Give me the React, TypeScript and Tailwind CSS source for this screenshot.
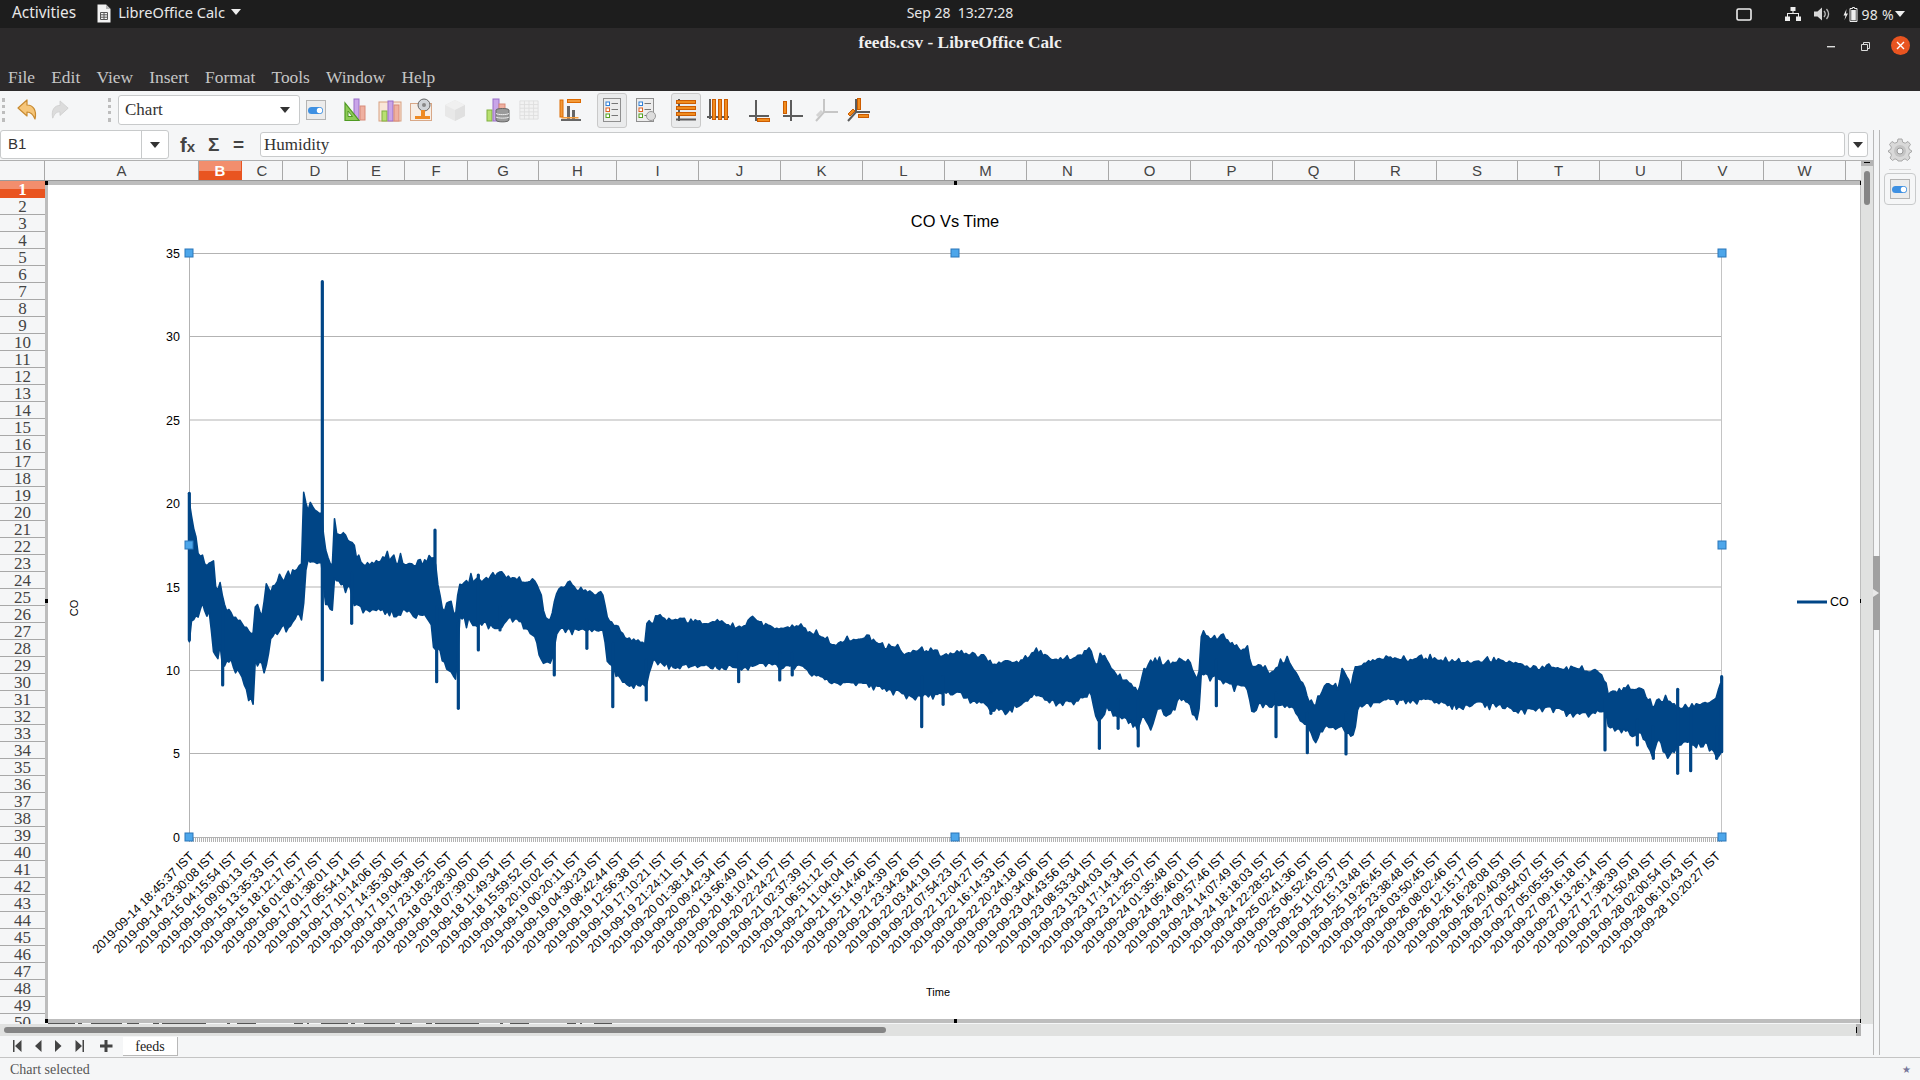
import { useMemo } from "react";

const serif = "font-['Liberation_Serif',serif]";
const sans = "font-['Liberation_Sans',sans-serif]";
const ui = "font-['Noto_Sans',sans-serif]";

type Col = { label: string; w: number; active?: boolean };

const columns: Col[] = [
  { label: "A", w: 154 },
  { label: "B", w: 43, active: true },
  { label: "C", w: 41 },
  { label: "D", w: 65 },
  { label: "E", w: 57 },
  { label: "F", w: 63 },
  { label: "G", w: 71 },
  { label: "H", w: 78 },
  { label: "I", w: 82 },
  { label: "J", w: 82 },
  { label: "K", w: 82 },
  { label: "L", w: 82 },
  { label: "M", w: 82 },
  { label: "N", w: 82 },
  { label: "O", w: 82 },
  { label: "P", w: 82 },
  { label: "Q", w: 82 },
  { label: "R", w: 82 },
  { label: "S", w: 81 },
  { label: "T", w: 82 },
  { label: "U", w: 82 },
  { label: "V", w: 82 },
  { label: "W", w: 82 },
];

const stamps = `2019-09-14 18:45:37,2019-09-14 23:30:08,2019-09-15 04:15:54,2019-09-15 09:00:13,2019-09-15 13:35:33,2019-09-15 18:12:17,2019-09-16 01:08:17,2019-09-17 01:38:01,2019-09-17 05:54:14,2019-09-17 10:14:06,2019-09-17 14:35:30,2019-09-17 19:04:38,2019-09-17 23:18:25,2019-09-18 03:28:30,2019-09-18 07:39:00,2019-09-18 11:49:34,2019-09-18 15:59:52,2019-09-18 20:10:02,2019-09-19 00:20:11,2019-09-19 04:30:23,2019-09-19 08:42:44,2019-09-19 12:56:38,2019-09-19 17:10:21,2019-09-19 21:24:11,2019-09-20 01:38:14,2019-09-20 09:42:34,2019-09-20 13:56:49,2019-09-20 18:10:41,2019-09-20 22:24:27,2019-09-21 02:37:39,2019-09-21 06:51:12,2019-09-21 11:04:04,2019-09-21 15:14:46,2019-09-21 19:24:39,2019-09-21 23:34:26,2019-09-22 03:44:19,2019-09-22 07:54:23,2019-09-22 12:04:27,2019-09-22 16:14:33,2019-09-22 20:24:18,2019-09-23 00:34:06,2019-09-23 04:43:56,2019-09-23 08:53:34,2019-09-23 13:04:03,2019-09-23 17:14:34,2019-09-23 21:25:07,2019-09-24 01:35:48,2019-09-24 05:46:01,2019-09-24 09:57:46,2019-09-24 14:07:49,2019-09-24 18:18:03,2019-09-24 22:28:52,2019-09-25 02:41:36,2019-09-25 06:52:45,2019-09-25 11:02:37,2019-09-25 15:13:48,2019-09-25 19:26:45,2019-09-25 23:38:48,2019-09-26 03:50:45,2019-09-26 08:02:46,2019-09-26 12:15:17,2019-09-26 16:28:08,2019-09-26 20:40:39,2019-09-27 00:54:07,2019-09-27 05:05:55,2019-09-27 09:16:18,2019-09-27 13:26:14,2019-09-27 17:38:39,2019-09-27 21:50:49,2019-09-28 02:00:54,2019-09-28 06:10:43,2019-09-28 10:20:27`.split(",");

// envelope of the CO series, traced off the plot: [x, top, bottom]
const traceA = [[148,780,1190],[155,830,1130],[165,880,1130],[175,950,1130],[185,960,1090],[205,975,1100],[215,970,1150],[222,990,1260],[230,1060,1240],[240,1035,1210],[248,1080,1280],[258,1115,1270],[275,1125,1260],[285,1140,1285],[300,1135,1290],[315,1165,1340],[325,1165,1370],[340,1190,1385],[345,1105,1260],[355,1110,1265],[365,1130,1275],[378,1040,1285],[392,1060,1190],[410,1030,1180],[430,1020,1160],[450,1010,1160],[470,985,1125],[488,965,1115],[490,770,1100],[500,810,960],[510,805,970],[530,815,960],[545,820,970],[555,920,1080],[570,965,1110],[578,975,1115],[582,845,1020],[590,880,1020],[610,885,1035],[630,900,1040],[640,905,1090],[650,955,1095],[680,975,1115],[710,965,1110],[745,958,1115],[770,965,1105],[800,970,1115],[850,975,1125],[870,955,1130],[885,950,1225],[895,1040,1220],[905,1110,1250],[920,1115,1280],[930,1085,1295],[945,1125,1320],[950,1130,1330],[958,1030,1135],[1000,1025,1140],[1030,1020,1150],[1080,1000,1170],[1110,1015,1130],[1140,1020,1145],[1190,1030,1200]].map(([x, t, b]) => [140 + x / 3, 240 + t / 3, 240 + b / 3]);
const traceB = [[0,95,290],[10,165,310],[25,180,310],[40,85,210],[60,72,210],[90,90,210],[143,105,215],[150,170,300],[175,205,345],[195,235,380],[215,245,375],[235,248,375],[240,185,350],[255,185,300],[268,165,310],[290,185,315],[315,175,320],[340,190,315],[380,190,320],[412,185,320],[430,205,320],[445,210,325],[480,170,320],[500,195,310],[537,205,320],[585,195,320],[600,215,335],[630,228,355],[660,255,370],[680,242,372],[730,232,372],[750,245,380],[780,265,390],[800,260,395],[820,290,410],[850,268,410],[880,280,405],[903,285,400],[945,275,400],[965,290,425],[990,285,425],[1010,310,455],[1025,310,445],[1042,305,460],[1060,310,440],[1085,300,430],[1107,272,405],[1135,290,420],[1165,300,430],[1200,295,425],[1233,265,395],[1248,330,470],[1253,272,490],[1270,310,440],[1295,350,475],[1320,365,480],[1340,395,505],[1350,340,470],[1367,305,505],[1385,303,440],[1410,320,470],[1432,295,415],[1455,305,430],[1475,370,495],[1480,228,345],[1515,235,350],[1530,232,365],[1560,262,378]].map(([x, t, b]) => [540 + x / 2.24, 560 + t / 3, 560 + b / 3]);
const traceC = [[0,150,260],[20,140,265],[40,210,340],[60,193,310],[90,220,320],[125,190,315],[140,185,320],[165,210,330],[180,240,365],[205,300,380],[225,320,435],[240,290,400],[258,245,380],[280,255,385],[295,275,390],[307,200,380],[335,262,410],[342,195,410],[355,195,315],[400,180,312],[445,170,300],[510,182,305],[540,175,300],[600,180,305],[660,185,320],[720,185,310],[780,182,315],[830,190,330],[890,210,330],[930,195,322],[1000,212,345],[1075,210,335],[1098,250,340],[1103,280,380],[1160,268,395],[1205,268,405],[1240,320,470],[1255,300,415],[1285,300,465],[1330,330,430],[1375,310,430],[1405,305,435],[1430,295,470],[1445,230,455]].map(([x, t, b]) => [1240 + x / 3, 600 + t / 3, 600 + b / 3]);

// narrow dips and peaks that stick out of the band: [x, y1, y2]
const spikes = [
  [140 + 148 / 3, 240 + 760 / 3, 240 + 1200 / 3],
  [140 + 248 / 3, 240 + 1100 / 3, 240 + 1335 / 3],
  [140 + 547 / 3, 240 + 125 / 3, 240 + 1320 / 3],
  [140 + 635 / 3, 240 + 1000 / 3, 240 + 1150 / 3],
  [140 + 885 / 3, 240 + 870 / 3, 240 + 1000 / 3],
  [140 + 890 / 3, 240 + 1100 / 3, 240 + 1325 / 3],
  [140 + 955 / 3, 240 + 1150 / 3, 240 + 1405 / 3],
  [140 + 1015 / 3, 240 + 1005 / 3, 240 + 1230 / 3],
  [140 + 1080 / 3, 240 + 1100 / 3, 240 + 1170 / 3],
  [540 + 32 / 2.24, 560 + 250 / 3, 560 + 345 / 3],
  [540 + 105 / 2.24, 560 + 180 / 3, 560 + 265 / 3],
  [540 + 163 / 2.24, 560 + 250 / 3, 560 + 440 / 3],
  [540 + 238 / 2.24, 560 + 300 / 3, 560 + 420 / 3],
  [540 + 445 / 2.24, 560 + 280 / 3, 560 + 365 / 3],
  [540 + 537 / 2.24, 560 + 280 / 3, 560 + 360 / 3],
  [540 + 565 / 2.24, 560 + 280 / 3, 560 + 345 / 3],
  [540 + 855 / 2.24, 560 + 350 / 3, 560 + 500 / 3],
  [540 + 903 / 2.24, 560 + 350 / 3, 560 + 433 / 3],
  [540 + 1010 / 2.24, 560 + 400 / 3, 560 + 460 / 3],
  [540 + 1253 / 2.24, 560 + 400 / 3, 560 + 565 / 3],
  [540 + 1295 / 2.24, 560 + 420 / 3, 560 + 505 / 3],
  [540 + 1340 / 2.24, 560 + 420 / 3, 560 + 558 / 3],
  [540 + 1515 / 2.24, 560 + 300 / 3, 560 + 437 / 3],
  [1240 + 108 / 3, 600 + 280 / 3, 600 + 410 / 3],
  [1240 + 202 / 3, 600 + 340 / 3, 600 + 458 / 3],
  [1240 + 318 / 3, 600 + 340 / 3, 600 + 462 / 3],
  [1240 + 1095 / 3, 600 + 300 / 3, 600 + 450 / 3],
  [1240 + 1192 / 3, 600 + 360 / 3, 600 + 435 / 3],
  [1240 + 1240 / 3, 600 + 380 / 3, 600 + 475 / 3],
  [1240 + 1313 / 3, 600 + 268 / 3, 600 + 520 / 3],
  [1240 + 1352 / 3, 600 + 330 / 3, 600 + 512 / 3],
  [1240 + 1430 / 3, 600 + 380 / 3, 600 + 475 / 3],
  [1240 + 1445 / 3, 600 + 230 / 3, 600 + 455 / 3],
];

function noise(i: number) {
  const v = Math.sin(i * 12.9898) * 43758.5453;
  return v - Math.floor(v);
}

function buildBand() {
  const pts = [...traceA, ...traceB, ...traceC];
  const top: string[] = [];
  const bottom: string[] = [];
  let seg = 0;
  let i = 0;
  for (let x = pts[0][0]; x <= pts[pts.length - 1][0]; x += 2.2) {
    while (seg < pts.length - 2 && pts[seg + 1][0] < x) seg++;
    const a = pts[seg];
    const b = pts[seg + 1];
    const t = (x - a[0]) / (b[0] - a[0] || 1);
    // the start of the series is a lot rougher than the rest
    const rough = x < 480 ? 8 : 5;
    const up = a[1] + (b[1] - a[1]) * t + 2 - noise(i) * noise(i + 90) * rough * 1.6;
    const down = a[2] + (b[2] - a[2]) * t - 2 + noise(i + 500) * noise(i + 700) * rough * 1.6;
    top.push(`${x.toFixed(1)},${up.toFixed(1)}`);
    bottom.unshift(`${x.toFixed(1)},${down.toFixed(1)}`);
    i++;
  }
  return [...top, ...bottom].join(" ");
}

function Chart() {
  const band = useMemo(buildBand, []);
  const ticks = [
    { v: 35, y: 253.5 },
    { v: 30, y: 336.5 },
    { v: 25, y: 420 },
    { v: 20, y: 503.5 },
    { v: 15, y: 587 },
    { v: 10, y: 670.5 },
    { v: 5, y: 753.5 },
    { v: 0, y: 837.5 },
  ];
  const handles = [
    [189, 253],
    [955, 253],
    [1722, 253],
    [189, 545],
    [1722, 545],
    [189, 837],
    [955, 837],
    [1722, 837],
  ];
  const blackMarks = [
    [45, 181, 3, 4],
    [954, 181, 3, 4],
    [1860, 181, 1, 4],
    [45, 599, 3, 4],
    [1860, 599, 1, 4],
    [45, 1019, 3, 4],
    [954, 1019, 3, 4],
    [1860, 1019, 1, 4],
  ];
  return (
    <svg viewBox="45 181 1816 843" className={`block w-[1816px] h-[843px] ${sans}`}>
      <rect x="45" y="181" width="1816" height="842" fill="#ffffff" />
      <rect x="45" y="181" width="1816" height="4" fill="#bdbdbd" />
      <rect x="45" y="1019" width="1816" height="4" fill="#bdbdbd" />
      <rect x="45" y="181" width="3" height="842" fill="#bdbdbd" />
      <rect x="1860" y="181" width="1" height="842" fill="#bdbdbd" />
      {blackMarks.map(([x, y, w, h]) => (
        <rect key={`${x}-${y}`} x={x} y={y} width={w} height={h} fill="#000" />
      ))}
      <line x1="48" x2="612" y1="1023.5" y2="1023.5" stroke="#555" strokeDasharray="27 3 4 9 31 5 12 14 6 3 44 21 3 7 19 38 9 4 2 12" />

      <text x="955" y="227" textAnchor="middle" fontSize="16.4" fill="#000">
        CO Vs Time
      </text>
      {ticks.map((t) => (
        <g key={t.v}>
          <line x1="189.5" x2="1722" y1={t.y} y2={t.y} stroke="#b3b3b3" />
          <text x="180" y={t.y + 4.5} textAnchor="end" fontSize="12.5" fill="#000">
            {t.v}
          </text>
        </g>
      ))}
      <line x1="189.5" x2="189.5" y1="253" y2="838" stroke="#b3b3b3" />
      <line x1="1721.5" x2="1721.5" y1="253" y2="838" stroke="#c4c4c4" />
      <line x1="189" x2="1722" y1="840" y2="840" stroke="#b3b3b3" strokeWidth="4" strokeDasharray="1 1" />

      <polygon points={band} fill="#004586" stroke="#004586" strokeWidth="1.6" strokeLinejoin="round" />
      {spikes.map(([x, a, b], i) => (
        <line key={i} x1={x} x2={x} y1={a} y2={b} stroke="#004586" strokeWidth="3.2" strokeLinecap="round" />
      ))}

      {handles.map(([x, y]) => (
        <rect key={`${x}-${y}`} x={x - 4} y={y - 4} width="8" height="8" fill="#4da6ea" stroke="#2b76b9" />
      ))}

      {stamps.map((s, i) => {
        const x = 194.5 + i * 21.5;
        return (
          <text key={s} x={x} y="857" textAnchor="end" fontSize="12.35" fill="#000" transform={`rotate(-45 ${x} 857)`}>
            {s} IST
          </text>
        );
      })}

      <text x="938" y="996" textAnchor="middle" fontSize="11" fill="#000">
        Time
      </text>
      <text x="78" y="608" textAnchor="middle" fontSize="11" fill="#000" transform="rotate(-90 78 608)">
        CO
      </text>
      <line x1="1797" x2="1827" y1="602" y2="602" stroke="#004586" strokeWidth="3" />
      <text x="1830" y="606" fontSize="12.5" fill="#000">
        CO
      </text>
    </svg>
  );
}

function Caret({ className = "", color = "#333" }: { className?: string; color?: string }) {
  return (
    <svg width="10" height="6" viewBox="0 0 10 6" className={className}>
      <polygon points="0,0 10,0 5,6" fill={color} />
    </svg>
  );
}

function CalcDocIcon() {
  return (
    <svg width="14" height="19" viewBox="0 0 14 19">
      <path d="M0.5 0.5H9L13.5 5V18.5H0.5Z" fill="#f2f2f2" />
      <path d="M9 0.5V5H13.5Z" fill="#b5b5b5" />
      <path d="M3.5 8.5H10.5V15.5H3.5ZM3.5 10.8H10.5M3.5 13.2H10.5M7 8.5V15.5" fill="none" stroke="#555" strokeWidth="1" />
    </svg>
  );
}

function SysIcons() {
  return (
    <div className="flex items-center">
      <svg width="16" height="13" viewBox="0 0 16 13" className="mr-[33px]">
        <rect x="1" y="1" width="14" height="11" rx="1.5" fill="none" stroke="#eee" strokeWidth="1.6" />
      </svg>
      <svg width="16" height="14" viewBox="0 0 16 14" className="mr-[13px]">
        <path d="M5.5 0H10.5V4H8.5V6H14V9.5H16V14H11V9.5H13V7H3V9.5H5V14H0V9.5H2V6H7.5V4H5.5Z" fill="#eee" />
      </svg>
      <svg width="16" height="14" viewBox="0 0 16 14" className="mr-[13px]">
        <path d="M0 4.5H3.5L8 0.5V13.5L3.5 9.5H0Z" fill="#d8d8d8" />
        <path d="M10 4C11.4 5.7 11.4 8.3 10 10M12.5 2C15 5 15 9 12.5 12" fill="none" stroke="#bbb" strokeWidth="1.3" />
      </svg>
      <svg width="15" height="15" viewBox="0 0 15 15" className="mr-[4px]">
        <path d="M3.5 2L0.5 8.5H2.5L1.5 13L5 6.5H3Z" fill="#eee" />
        <path d="M9.5 0.5H11.5V1.5H14V14.5H7V1.5H9.5Z" fill="none" stroke="#eee" />
        <rect x="8.2" y="3" width="4.6" height="10.4" fill="#eee" />
      </svg>
      <span className="text-[14px] tracking-[0.3px] text-[#e6e6e6]">98 %</span>
      <Caret color="#eee" className="ml-[1px]" />
    </div>
  );
}

function TopBar() {
  return (
    <div className={`grid h-[28px] grid-cols-[1fr_auto_1fr] items-center bg-[#1d1d1d] pb-[3px] text-[14.6px] text-[#e8e8e8] ${ui}`}>
      <div className="flex items-center pl-[12px]">
        <span className="text-[15.4px]">Activities</span>
        <span className="ml-[21px] mt-[3px]">
          <CalcDocIcon />
        </span>
        <span className="ml-[7px]">LibreOffice Calc</span>
        <Caret color="#eee" className="ml-[6px]" />
      </div>
      <div className="whitespace-pre text-[14px]">Sep 28  13:27:28</div>
      <div className="flex justify-end pr-[15px] pt-[3px]">
        <SysIcons />
      </div>
    </div>
  );
}

function TitleBar() {
  const menus = ["File", "Edit", "View", "Insert", "Format", "Tools", "Window", "Help"];
  return (
    <div className={`bg-[#2c2a2b] ${serif}`}>
      <div className="grid h-[35px] grid-cols-[1fr_auto_1fr] items-center">
        <div />
        <div className="pb-[5px] text-[17.3px] font-bold text-[#f0f0f0]">feeds.csv - LibreOffice Calc</div>
        <div className="flex items-center justify-end pr-[10px]">
          <svg width="8" height="2" viewBox="0 0 8 2" className="mt-[2px]">
            <rect width="8" height="1.4" fill="#ddd" />
          </svg>
          <svg width="9" height="9" viewBox="0 0 9 9" className="ml-[26px] mt-[1px]">
            <path d="M2.5 2V0.5H8.5V6.5H7M0.5 2.5H6.5V8.5H0.5Z" fill="none" stroke="#ddd" />
          </svg>
          <span className="ml-[21px] flex h-[19px] w-[19px] items-center justify-center rounded-full bg-[#e95420]">
            <svg width="9" height="9" viewBox="0 0 9 9">
              <path d="M1 1L8 8M8 1L1 8" stroke="#fff" strokeWidth="1.4" />
            </svg>
          </span>
        </div>
      </div>
      <div className="flex h-[28px] items-center gap-[16.2px] pl-[8px] text-[17.4px] text-[#c6c6c6]">
        {menus.map((m) => (
          <span key={m}>{m}</span>
        ))}
      </div>
    </div>
  );
}

function ToggleIcon() {
  return (
    <svg width="24" height="24" viewBox="0 0 24 24">
      <rect x="2.5" y="2.5" width="19" height="19" fill="#ececec" stroke="#b4b4b4" />
      <rect x="4" y="9" width="15" height="7" rx="3.5" fill="#3e90e2" />
      <circle cx="15.5" cy="12.5" r="2.7" fill="#fff" />
    </svg>
  );
}

function ChartTypeIcon() {
  return (
    <svg width="24" height="26" viewBox="0 0 24 26">
      <rect x="10" y="2" width="5" height="21" fill="#c9a5e8" stroke="#9a6ec8" />
      <rect x="16" y="9" width="5" height="14" fill="#efb0a0" stroke="#d88a78" />
      <path d="M1 23.5V6L15 23.5Z" fill="#8ecb57" stroke="#4f9a22" strokeWidth="1.2" />
      <path d="M4 19.5V14L8.5 19.5Z" fill="#f5f6f7" stroke="#4f9a22" />
    </svg>
  );
}

function ChartDataIcon() {
  return (
    <svg width="24" height="26" viewBox="0 0 24 26">
      <rect x="1" y="5" width="22" height="19" fill="#f9e6d8" stroke="#d8a080" />
      <rect x="4" y="14" width="5" height="10" fill="#b8e070" stroke="#80b040" />
      <rect x="10" y="4" width="5" height="20" fill="#c9a5e8" stroke="#9a6ec8" />
      <rect x="16" y="8" width="5" height="16" fill="#efb0a0" stroke="#d88a78" />
    </svg>
  );
}

function ChartPicIcon() {
  return (
    <svg width="24" height="26" viewBox="0 0 24 26">
      <rect x="0.5" y="6.5" width="21" height="17" fill="#f7eee6" stroke="#d8a888" />
      <path d="M5 19H20V22H5Z" fill="#ee8a24" />
      <circle cx="14" cy="8" r="6" fill="#d0d4d8" stroke="#666" />
      <circle cx="14" cy="8" r="2" fill="#888" />
      <rect x="11" y="13" width="4" height="6" fill="#ee8a24" />
    </svg>
  );
}

function CubeIcon() {
  return (
    <svg width="24" height="24" viewBox="0 0 24 24">
      <path d="M12 2L22 7V18L12 23L2 18V7Z" fill="#e8e8e8" />
      <path d="M12 2L22 7L12 12L2 7Z" fill="#f0f0f0" />
      <path d="M12 12L22 7V18L12 23Z" fill="#e0e0e0" />
    </svg>
  );
}

function DataBaseIcon() {
  return (
    <svg width="24" height="26" viewBox="0 0 24 26">
      <rect x="1" y="13" width="5" height="11" fill="#b8e070" stroke="#80b040" />
      <rect x="7" y="2" width="6" height="22" fill="#c9a5e8" stroke="#9a6ec8" />
      <rect x="13" y="7" width="6" height="10" fill="#efb0a0" stroke="#d88a78" />
      <path d="M10 13C10 11 23 11 23 13V23C23 25.5 10 25.5 10 23Z" fill="#9a9a9a" stroke="#666" />
      <path d="M10 16.5C12 18 21 18 23 16.5M10 20C12 21.5 21 21.5 23 20" fill="none" stroke="#eee" />
    </svg>
  );
}

function GridIcon() {
  return (
    <svg width="20" height="24" viewBox="0 0 22 24">
      <path d="M1 2H21V22H1ZM1 6H21M1 10H21M1 14H21M1 18H21M6 2V22M11 2V22M16 2V22" fill="#f2f2f2" stroke="#dedede" />
    </svg>
  );
}

function ScaleAxisIcon() {
  return (
    <svg width="24" height="26" viewBox="0 0 24 26">
      <rect x="2" y="3" width="3" height="17" fill="#f29a3a" stroke="#dd6a00" />
      <rect x="9" y="9" width="3" height="13" fill="#666" />
      <rect x="14" y="13" width="3" height="9" fill="#666" />
      <rect x="3" y="22" width="20" height="2" fill="#666" />
      <rect x="9.5" y="2.5" width="13" height="3" fill="#f29a3a" stroke="#dd6a00" />
      <rect x="3.5" y="20" width="17" height="1.5" fill="#f29a3a" />
    </svg>
  );
}

function LegendIcon({ gear }: { gear?: boolean }) {
  return (
    <svg width="24" height="28" viewBox="0 0 24 28">
      <rect x="3.5" y="2.5" width="17" height="23" fill="#ededed" stroke="#8f8f8f" />
      <rect x="6" y="6" width="3.5" height="3.5" fill="#fff" stroke="#2f7fd6" />
      <rect x="6" y="12" width="3.5" height="3.5" fill="#fff" stroke="#e06020" />
      <rect x="6" y="18" width="3.5" height="3.5" fill="#fff" stroke="#55a020" />
      <path d="M11.5 7.5H18M11.5 13.5H18M11.5 19.5H18" stroke="#777" />
      {gear && <circle cx="18" cy="20" r="4.5" fill="#ddd" stroke="#999" />}
    </svg>
  );
}

function AxisBars({ kind }: { kind: "h" | "v" | "x" | "y" | "z" | "all" }) {
  const grey = kind === "z" ? "#c6c6c6" : "#5c5c5c";
  const bar = { fill: "#f08c1e", stroke: "#cc5c00" };
  if (kind === "h") {
    return (
      <svg width="22" height="26" viewBox="0 0 22 26">
        <rect x="3" y="2" width="2" height="22" fill={grey} />
        <rect x="1" y="21.5" width="20" height="2" fill={grey} />
        <rect x="1.5" y="3.5" width="19" height="3" {...bar} />
        <rect x="1.5" y="9.5" width="19" height="3" {...bar} />
        <rect x="1.5" y="15.5" width="19" height="3" {...bar} />
      </svg>
    );
  }
  if (kind === "v") {
    return (
      <svg width="22" height="26" viewBox="0 0 22 26">
        <rect x="0" y="19" width="22" height="2" fill={grey} />
        <rect x="2" y="2" width="2" height="20" fill={grey} />
        <rect x="5.5" y="2.5" width="3" height="20" {...bar} />
        <rect x="11.5" y="2.5" width="3" height="20" {...bar} />
        <rect x="17.5" y="2.5" width="3" height="20" {...bar} />
      </svg>
    );
  }
  if (kind === "x") {
    return (
      <svg width="22" height="26" viewBox="0 0 22 26">
        <rect x="6" y="3" width="2" height="21" fill={grey} />
        <rect x="0" y="18" width="20" height="2" fill={grey} />
        <rect x="8.5" y="21.5" width="12" height="3" {...bar} />
      </svg>
    );
  }
  if (kind === "y") {
    return (
      <svg width="22" height="26" viewBox="0 0 22 26">
        <rect x="8" y="3" width="2" height="21" fill={grey} />
        <rect x="1" y="18" width="20" height="2" fill={grey} />
        <rect x="1.5" y="4.5" width="3" height="12" {...bar} />
      </svg>
    );
  }
  return (
    <svg width="24" height="28" viewBox="0 0 24 28">
      <path d="M10 3V16M10 16H24M10 16L2 25" stroke={grey} strokeWidth="2" fill="none" />
      {kind === "all" && (
        <>
          <rect x="11.5" y="2.5" width="3" height="11" {...bar} />
          <rect x="12.5" y="18.5" width="10" height="3" {...bar} />
          <path d="M2 18L7 13L9 15L4 20Z" {...bar} />
        </>
      )}
      {kind === "z" && <path d="M3 20L8 15" stroke="#d4d4d4" strokeWidth="3" />}
    </svg>
  );
}

function Slot({ ml, pressed, children }: { ml: string; pressed?: boolean; children: React.ReactNode }) {
  return (
    <div
      className={`flex h-[35px] w-[30px] shrink-0 items-center justify-center rounded-[3px] ${ml} ${
        pressed ? "border border-[#c9c9c9] bg-[#eaebec]" : ""
      }`}
    >
      {children}
    </div>
  );
}

function Grip({ ml }: { ml: string }) {
  return <div className={`h-[24px] w-[3px] shrink-0 border-l-[3px] border-dotted border-[#bdbdbd] ${ml}`} />;
}

function Toolbar() {
  return (
    <div className="flex h-[39px] items-center bg-[#f5f6f7] pb-[1px]">
      <Grip ml="ml-[2px]" />
      <Slot ml="ml-[7px]">
        <svg width="22" height="24" viewBox="0 0 22 24">
          <path d="M2 10L11 2V7C17 7 21 12 19 21C17 16 15 14 11 14V18Z" fill="#f6c67a" stroke="#c88a30" strokeWidth="1.2" strokeLinejoin="round" />
        </svg>
      </Slot>
      <Slot ml="ml-[3px]">
        <svg width="20" height="22" viewBox="0 0 22 24">
          <path d="M20 10L11 2V7C5 7 1 12 3 21C5 16 7 14 11 14V18Z" fill="#dcdcdc" stroke="#cfcfcf" strokeLinejoin="round" />
        </svg>
      </Slot>
      <Grip ml="ml-[33px]" />
      <div className={`ml-[7px] flex h-[30px] w-[182px] shrink-0 items-center justify-between rounded-[3px] border border-[#c8cacb] bg-white pl-[6px] pr-[9px] text-[17px] text-[#333] ${serif}`}>
        <span>Chart</span>
        <Caret />
      </div>
      <Slot ml="ml-[1px]">
        <ToggleIcon />
      </Slot>
      <Slot ml="ml-[10px]">
        <ChartTypeIcon />
      </Slot>
      <Slot ml="ml-[4px]">
        <ChartDataIcon />
      </Slot>
      <Slot ml="ml-[2px]">
        <ChartPicIcon />
      </Slot>
      <Slot ml="ml-[3px]">
        <CubeIcon />
      </Slot>
      <Slot ml="ml-[13px]">
        <DataBaseIcon />
      </Slot>
      <Slot ml="ml-[1px]">
        <GridIcon />
      </Slot>
      <Slot ml="ml-[11px]">
        <ScaleAxisIcon />
      </Slot>
      <Slot ml="ml-[12px]" pressed>
        <LegendIcon />
      </Slot>
      <Slot ml="ml-[3px]">
        <LegendIcon gear />
      </Slot>
      <Slot ml="ml-[11px]" pressed>
        <AxisBars kind="h" />
      </Slot>
      <Slot ml="ml-[2px]">
        <AxisBars kind="v" />
      </Slot>
      <Slot ml="ml-[12px]">
        <AxisBars kind="x" />
      </Slot>
      <Slot ml="ml-[3px]">
        <AxisBars kind="y" />
      </Slot>
      <Slot ml="ml-[3px]">
        <AxisBars kind="z" />
      </Slot>
      <Slot ml="ml-[2px]">
        <AxisBars kind="all" />
      </Slot>
    </div>
  );
}

function FormulaBar() {
  return (
    <div className="flex h-[30px] bg-[#f5f6f7]">
      <div className={`flex h-[29px] w-[169px] shrink-0 rounded-[3px] border border-[#c8cacb] bg-white text-[15px] text-[#333] ${sans}`}>
        <span className="flex-1 self-center pl-[7px]">B1</span>
        <span className="flex w-[27px] items-center justify-center border-l border-[#c8cacb]">
          <Caret />
        </span>
      </div>
      <div className={`flex w-[91px] shrink-0 items-center pb-[1px] pl-[11px] font-bold text-[#444] ${sans}`}>
        <span className="w-[28px] text-[20px] leading-none">
          f<span className="text-[15px]">x</span>
        </span>
        <span className="w-[25px] text-[19px] leading-none">Σ</span>
        <span className="text-[19px] leading-none">=</span>
      </div>
      <div className="mt-[2px] flex h-[25px] w-[1585px] shrink-0 items-center rounded-[3px] border border-[#c8cacb] bg-white pl-[3px]">
        <span className={`text-[17px] text-[#333] ${serif}`}>Humidity</span>
      </div>
      <div className="ml-[3px] mt-[2px] flex h-[25px] w-[20px] shrink-0 items-center justify-center rounded-[3px] border border-[#c8cacb] bg-white">
        <Caret />
      </div>
    </div>
  );
}

function ColumnHeader() {
  return (
    <div className={`flex h-[21px] overflow-hidden border-y border-t-[#b0b0b0] border-b-[#999] bg-[#f5f6f7] text-[15px] text-[#444] ${sans}`}>
      <div className="w-[45px] shrink-0 border-r border-[#a8a8a8]" />
      {columns.map((c) => (
        <div
          key={c.label}
          style={{ width: c.w }}
          className={`flex shrink-0 items-center justify-center border-r pt-[1px] ${
            c.active
              ? "border-[#e95420] bg-[linear-gradient(#f28e6d_50%,#e95420_50%)] font-bold text-white"
              : "border-[#a8a8a8]"
          }`}
        >
          {c.label}
        </div>
      ))}
    </div>
  );
}

function RowHeader() {
  const rows = Array.from({ length: 50 }, (_, i) => i + 1);
  return (
    <div className={`h-[843px] w-[45px] shrink-0 overflow-hidden bg-[#f5f6f7] text-[17px] leading-[17px] text-[#444] ${serif}`}>
      {rows.map((r) => (
        <div
          key={r}
          className={`flex h-[17px] items-center justify-center overflow-hidden border-b pt-[1px] ${
            r === 1
              ? "border-[#e95420] bg-[linear-gradient(#f28e6d_50%,#e95420_50%)] font-bold text-white"
              : "border-[#a8a8a8]"
          }`}
        >
          {r}
        </div>
      ))}
    </div>
  );
}

function VScroll() {
  return (
    <div className="flex h-[864px] w-[12px] shrink-0 flex-col items-center bg-[#e0e1e0]">
      <div className="flex h-[6px] w-full items-start justify-center bg-[#b4b4b4]">
        <div className="mt-[2px] h-[1px] w-[6px] bg-black" />
      </div>
      <div className="mt-[5px] h-[34px] w-[6px] rounded-[3px] bg-[#858585]" />
    </div>
  );
}

function HScroll() {
  return (
    <div className="mr-[12px] flex h-[12px] items-center bg-[#e0e1e0] pl-[4px]">
      <div className="h-[6px] w-[882px] rounded-[3px] bg-[#858585]" />
      <div className="ml-auto flex h-[12px] w-[5px] items-center bg-[#b4b4b4]">
        <div className="h-[6px] w-[1px] bg-black" />
      </div>
    </div>
  );
}

function TabBar() {
  const c = "#444";
  return (
    <div className="flex h-[21px] bg-[#f5f6f7]">
      <div className="flex w-[123px] shrink-0 items-center">
        <svg width="123" height="21" viewBox="0 0 123 21">
          <path d="M13 4V16H14.5V4ZM21.5 4L15 10L21.5 16Z" fill={c} />
          <path d="M41.5 4L35 10L41.5 16Z" fill={c} />
          <path d="M55 4L61.5 10L55 16Z" fill={c} />
          <path d="M75.5 4L82 10L75.5 16ZM82.5 4V16H84V4Z" fill={c} />
          <path d="M104.5 4H107.5V8.5H112.5V11.5H107.5V16H104.5V11.5H100V8.5H104.5Z" fill={c} />
        </svg>
      </div>
      <div className={`mt-[1px] flex h-[19px] w-[55px] items-center justify-center border-b border-r border-[#b8b8b8] bg-white text-[14px] text-[#222] ${serif}`}>
        feeds
      </div>
    </div>
  );
}

function Sidebar() {
  return (
    <div className="relative flex h-[925px] w-[47px] shrink-0">
      <div className="w-[7px] shrink-0 border-x border-[#b8b8b8] bg-[#f5f6f7]" />
      <div className="flex flex-1 flex-col items-center bg-[#f5f6f7] pt-[8px]">
        <svg width="24" height="24" viewBox="0 0 24 24">
          <path
            d="M10 1H14L14.7 4.2L17.2 5.2L20 3.5L22.5 6.5L20.6 9.1L21.4 11.6L23.5 12.5V14L21.4 15L20.6 17.3L22 20L19.5 22.5L17 20.8L14.7 21.8L14 23H10L9.3 21.8L7 20.8L4.5 22.5L2 20L3.4 17.3L2.6 15L0.5 14V12.5L2.6 11.6L3.4 9.1L1.5 6.5L4 3.5L6.8 5.2L9.3 4.2Z"
            fill="#d9d9d9"
            stroke="#a8a8a8"
          />
          <circle cx="12" cy="13" r="6" fill="#c4c4c4" />
          <circle cx="12" cy="13" r="3" fill="#f5f6f7" stroke="#999" />
        </svg>
        <div className="mt-[7px] h-[1px] w-[22px] bg-[#d9d9d9]" />
        <div className="mt-[3px] flex h-[32px] w-[32px] items-center justify-center rounded-[4px] border border-[#c8cacb]">
          <ToggleIcon />
        </div>
      </div>
      <div className="absolute left-0 top-[426px] flex h-[74px] w-[7px] items-center bg-[#a0a0a0]">
        <svg width="6" height="8" viewBox="0 0 6 8">
          <polygon points="0,0 6,4 0,8" fill="#e8e8e8" />
        </svg>
      </div>
    </div>
  );
}

export default function App() {
  return (
    <div className="h-[1080px] w-[1920px] overflow-hidden bg-[#f5f6f7]">
      <TopBar />
      <TitleBar />
      <Toolbar />
      <div className="flex h-[927px]">
        <div className="w-[1873px] shrink-0">
          <FormulaBar />
          <div className="flex">
            <div className="w-[1861px] shrink-0">
              <ColumnHeader />
              <div className="flex">
                <RowHeader />
                <Chart />
              </div>
            </div>
            <VScroll />
          </div>
          <HScroll />
          <TabBar />
        </div>
        <Sidebar />
      </div>
      <div className={`flex h-[23px] items-center justify-between border-t border-[#c4c4c4] pl-[10px] pr-[9px] text-[14px] text-[#555] ${serif}`}>
        <span>Chart selected</span>
        <span className="text-[10px] text-[#77779a]">★</span>
      </div>
    </div>
  );
}
